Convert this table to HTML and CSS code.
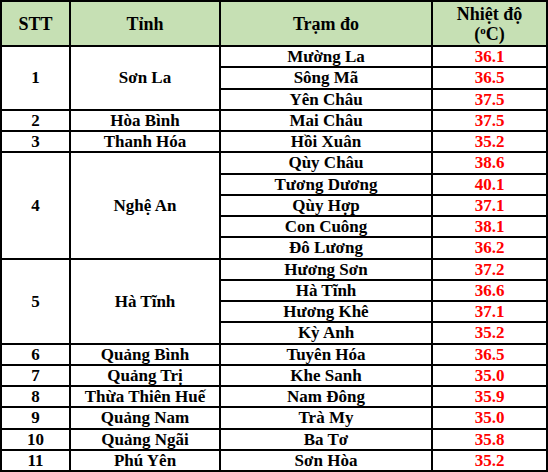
FILE: index.html
```html
<!DOCTYPE html>
<html lang="vi">
<head>
<meta charset="utf-8">
<link rel="stylesheet" href="styles.css">
</head>
<body>
<table class="grid">
  <colgroup>
    <col class="c1"><col class="c2"><col class="c3"><col class="c4">
  </colgroup>
  <thead>
    <tr class="head">
      <th>STT</th>
      <th>Tỉnh</th>
      <th>Trạm đo</th>
      <th>Nhiệt độ<br>(<sup>o</sup>C)</th>
    </tr>
  </thead>
  <tbody>
    <tr><td rowspan="3">1</td><td rowspan="3">Sơn La</td><td>Mường La</td><td class="t">36.1</td></tr>
    <tr><td>Sông Mã</td><td class="t">36.5</td></tr>
    <tr><td>Yên Châu</td><td class="t">37.5</td></tr>
    <tr><td>2</td><td>Hòa Bình</td><td>Mai Châu</td><td class="t">37.5</td></tr>
    <tr><td>3</td><td>Thanh Hóa</td><td>Hồi Xuân</td><td class="t">35.2</td></tr>
    <tr><td rowspan="5">4</td><td rowspan="5">Nghệ An</td><td>Qùy Châu</td><td class="t">38.6</td></tr>
    <tr><td>Tương Dương</td><td class="t">40.1</td></tr>
    <tr><td>Qùy Hợp</td><td class="t">37.1</td></tr>
    <tr><td>Con Cuông</td><td class="t">38.1</td></tr>
    <tr><td>Đô Lương</td><td class="t">36.2</td></tr>
    <tr><td rowspan="4">5</td><td rowspan="4">Hà Tĩnh</td><td>Hương Sơn</td><td class="t">37.2</td></tr>
    <tr><td>Hà Tĩnh</td><td class="t">36.6</td></tr>
    <tr><td>Hương Khê</td><td class="t">37.1</td></tr>
    <tr><td>Kỳ Anh</td><td class="t">35.2</td></tr>
    <tr><td>6</td><td>Quảng Bình</td><td>Tuyên Hóa</td><td class="t">36.5</td></tr>
    <tr><td>7</td><td>Quảng Trị</td><td>Khe Sanh</td><td class="t">35.0</td></tr>
    <tr><td>8</td><td>Thừa Thiên Huế</td><td>Nam Đông</td><td class="t">35.9</td></tr>
    <tr><td>9</td><td>Quảng Nam</td><td>Trà My</td><td class="t">35.0</td></tr>
    <tr><td>10</td><td>Quảng Ngãi</td><td>Ba Tơ</td><td class="t">35.8</td></tr>
    <tr><td>11</td><td>Phú Yên</td><td>Sơn Hòa</td><td class="t">35.2</td></tr>
  </tbody>
</table>
</body>
</html>
```

FILE: styles.css
```css
html, body {
  margin: 0;
  padding: 0;
  background: #ffffff;
}

.grid {
  border-collapse: collapse;
  table-layout: fixed;
  width: 546px;
  font-family: "Liberation Serif", "Times New Roman", serif;
  font-weight: bold;
  font-size: 17px;
  color: #000000;
}

.c1 { width: 69px; }
.c2 { width: 150px; }
.c3 { width: 212px; }
.c4 { width: 115px; }

.grid th,
.grid td {
  border: 2px solid #000000;
  padding: 0;
  text-align: center;
  vertical-align: middle;
  line-height: 19px;
}

.head th {
  background: #c6e0b4;
  height: 43px;
  font-size: 18px;
  line-height: 20px;
}

.head sup {
  font-size: 11px;
  vertical-align: 6px;
  line-height: 0;
}

.grid tbody tr {
  height: 21.25px;
}

.t {
  color: #ff0000;
}
```
